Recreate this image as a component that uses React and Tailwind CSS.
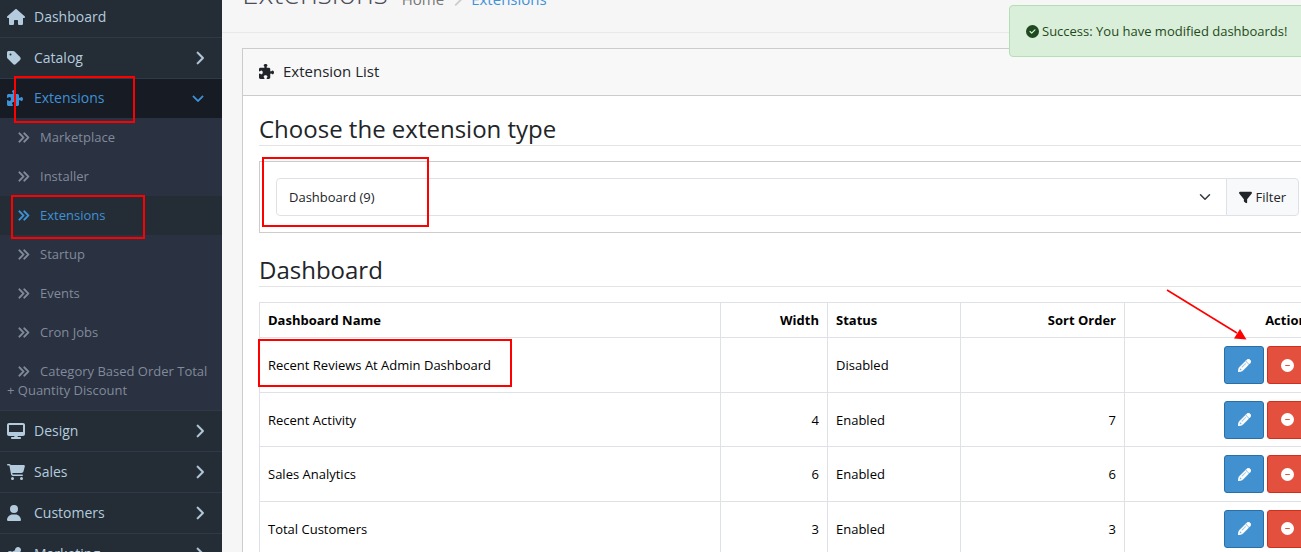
import {
  FaAnglesRight,
  FaCartShopping,
  FaChevronDown,
  FaChevronRight,
  FaCircleCheck,
  FaCircleMinus,
  FaDesktop,
  FaFilter,
  FaHouse,
  FaPencil,
  FaPuzzlePiece,
  FaShareNodes,
  FaTag,
  FaUser,
} from 'react-icons/fa6';

const subItems = [
  { label: 'Marketplace' },
  { label: 'Installer' },
  { label: 'Extensions', active: true },
  { label: 'Startup' },
  { label: 'Events' },
  { label: 'Cron Jobs' },
  { label: 'Category Based Order Total + Quantity Discount' },
];

// icon glyphs have different widths, the height is always 16px
const menu = [
  { label: 'Dashboard', icon: FaHouse, iconWidth: 'w-[18px]', leaf: true },
  { label: 'Catalog', icon: FaTag, iconWidth: 'w-[14px]' },
  { label: 'Extensions', icon: FaPuzzlePiece, iconWidth: 'w-4', open: true },
  { label: 'Design', icon: FaDesktop, iconWidth: 'w-[18px]' },
  { label: 'Sales', icon: FaCartShopping, iconWidth: 'w-[18px]' },
  { label: 'Customers', icon: FaUser, iconWidth: 'w-[14px]' },
  { label: 'Marketing', icon: FaShareNodes, iconWidth: 'w-[14px]' },
];

const rows = [
  { name: 'Recent Reviews At Admin Dashboard', width: '', status: 'Disabled', sort: '' },
  { name: 'Recent Activity', width: 4, status: 'Enabled', sort: 7 },
  { name: 'Sales Analytics', width: 6, status: 'Enabled', sort: 6 },
  { name: 'Total Customers', width: 3, status: 'Enabled', sort: 3 },
];

const MenuItem = ({ label, icon: Icon, iconWidth, leaf, open }) => (
  <li className="border-t border-[#2e3a47]">
    <a
      href="#"
      className={`flex items-center pr-[18px] pl-[7px] text-sm ${
        open ? 'h-[39px] bg-[#171b23] pb-0.5 text-[#3f92d6]' : 'h-10 text-[#b3cbdd]'
      }`}
    >
      <span className="w-[27px]">
        <Icon className={`h-4 ${iconWidth}`} />
      </span>
      <span className="flex-1">{label}</span>
      {!leaf &&
        (open ? (
          <FaChevronDown className="h-[14px] w-3 stroke-current stroke-[20px]" />
        ) : (
          <FaChevronRight className="h-[14px] w-[9px] stroke-current stroke-[20px]" />
        ))}
    </a>
    {open && (
      <ul className="bg-[#2a3140]">
        {subItems.map((item) => (
          <li key={item.label}>
            <a
              href="#"
              className={`block px-[7px] py-[10px] text-[13px] leading-[19px] ${
                item.active ? 'bg-[#242c36] text-[#3f92d6]' : 'text-[#808b9c]'
              }`}
            >
              <FaAnglesRight className="mr-[10px] ml-[10px] inline size-[13px] stroke-current stroke-[16px] align-[-2px]" />
              {item.label}
            </a>
          </li>
        ))}
      </ul>
    )}
  </li>
);

const Sidebar = () => (
  <nav className="w-[222px] shrink-0 bg-[#242c36]">
    <ul className="-mt-1">
      {menu.map((item) => (
        <MenuItem key={item.label} {...item} />
      ))}
    </ul>
  </nav>
);

const PageHeader = () => (
  <header className="-mt-[27px] flex h-[60px] items-start border-b border-[#e9e9e9] pl-5">
    <h1 className="text-[30px] leading-10 font-light text-[#4c4d5a]">Extensions</h1>
    <ol className="ml-[14px] flex items-center pt-[14px] text-[15px] leading-6">
      <li>
        <a href="#" className="text-[#777777]">Home</a>
      </li>
      <li>
        <FaChevronRight className="mx-[9px] h-[15px] w-[9px] text-[#cccccc]" />
      </li>
      <li>
        <a href="#" className="text-[#3f92d6]">Extensions</a>
      </li>
    </ol>
  </header>
);

const SectionTitle = ({ children }) => (
  <h2 className="mb-[15px] h-[34px] border-b border-[#e3e3e5] text-2xl leading-[34px] text-[#212529]">
    {children}
  </h2>
);

const ExtensionFilter = () => (
  <fieldset className="mb-5 flex border border-[#cccccc] p-4">
    <div className="relative flex-1">
      <select
        aria-label="Extension type"
        className="h-[38px] w-full appearance-none rounded-l border border-[#dee2e6] bg-white px-3 pt-0.5 text-[13px] text-[#212529]"
      >
        <option>Dashboard (9)</option>
      </select>
      <svg viewBox="0 0 16 16" className="pointer-events-none absolute top-[13px] right-4 size-3">
        <path d="m2 5 6 6 6-6" fill="none" stroke="#343a40" strokeWidth="2" strokeLinecap="round" strokeLinejoin="round" />
      </svg>
    </div>
    <button
      type="button"
      className="-ml-px flex h-[38px] items-center gap-[3px] rounded-r border border-[#dee2e6] bg-[#f8f9fa] px-3 text-[13px] leading-5 text-[#212529]"
    >
      <FaFilter />
      Filter
    </button>
  </fieldset>
);

const cell = 'border border-[#dee2e6] px-2';

const DashboardTable = () => (
  <table className="w-full table-fixed border-collapse text-[13px] leading-5 text-black">
    <thead>
      <tr className="h-[35px]">
        <th className={`${cell} text-left`}>Dashboard Name</th>
        <th className={`${cell} w-[107px] text-right`}>Width</th>
        <th className={`${cell} w-[133px] text-left`}>Status</th>
        <th className={`${cell} w-[164px] text-right`}>Sort Order</th>
        <th className={`${cell} w-[191px] text-right`}>Action</th>
      </tr>
    </thead>
    <tbody>
      {rows.map((row) => (
        <tr key={row.name} className="h-[55px] even:h-[54px]">
          <td className={cell}>{row.name}</td>
          <td className={`${cell} text-right`}>{row.width}</td>
          <td className={cell}>{row.status}</td>
          <td className={`${cell} text-right`}>{row.sort}</td>
          <td className={cell}>
            <div className="flex justify-end gap-[3px]">
              <button
                type="button"
                aria-label="Edit"
                className="flex h-[38px] w-10 items-center justify-center rounded-[3px] border border-[#2a6fa6] bg-[#4190d0] text-white"
              >
                <FaPencil className="stroke-white stroke-[24px]" />
              </button>
              <button
                type="button"
                aria-label="Uninstall"
                className="flex h-[38px] w-10 items-center justify-center rounded-[3px] border border-[#cf2f1c] bg-[#e3503e] text-white"
              >
                <FaCircleMinus />
              </button>
            </div>
          </td>
        </tr>
      ))}
    </tbody>
  </table>
);

const Toast = () => (
  <div
    role="alert"
    className="absolute top-[5px] -right-4 flex h-[52px] w-[308px] items-center gap-[3px] rounded border border-[#b4dfb4] bg-[#daefda] pl-4 text-[13px] leading-5 text-[#1f4a20]"
  >
    <FaCircleCheck />
    <span className="whitespace-nowrap">Success: You have modified dashboards!</span>
  </div>
);

// red marker boxes and the arrow pointing at the edit button
const Annotations = () => (
  <div className="pointer-events-none absolute inset-0">
    <div className="absolute top-[76px] left-[14px] h-[47px] w-[121px] border-2 border-[#ff0000]" />
    <div className="absolute top-[195px] left-[11px] h-[44px] w-[134px] border-2 border-[#ff0000]" />
    <div className="absolute top-[157px] left-[262px] h-[70px] w-[167px] border-2 border-[#ff0000]" />
    <div className="absolute top-[339px] left-[258px] h-[48px] w-[254px] border-2 border-[#ff0000]" />
    <svg viewBox="0 0 84 54" className="absolute top-[288px] right-[52px] h-[54px] w-[84px]">
      <path d="M2 2 72 45" stroke="#ff0000" strokeWidth="1.6" fill="none" />
      <path d="m81.500 51.500-12.500-1 6-9.500z" fill="#ff0000" />
    </svg>
  </div>
);

const App = () => (
  <div className="relative flex h-screen overflow-hidden bg-[#f6f6f6] font-['Open_Sans',sans-serif]">
    <Sidebar />
    <main className="min-w-0 flex-1">
      <PageHeader />
      <section className="mt-[15px] -mr-8 ml-5 border border-[#cccccc] bg-white">
        <div className="flex h-[47px] items-center gap-[9px] border-b border-[#cccccc] bg-[#f8f8f8] px-4 pb-0.5 text-[15px] text-[#212529]">
          <FaPuzzlePiece />
          Extension List
        </div>
        <div className="p-4">
          <SectionTitle>Choose the extension type</SectionTitle>
          <ExtensionFilter />
          <SectionTitle>Dashboard</SectionTitle>
          <DashboardTable />
        </div>
      </section>
    </main>
    <Toast />
    <Annotations />
  </div>
);

export default App;
